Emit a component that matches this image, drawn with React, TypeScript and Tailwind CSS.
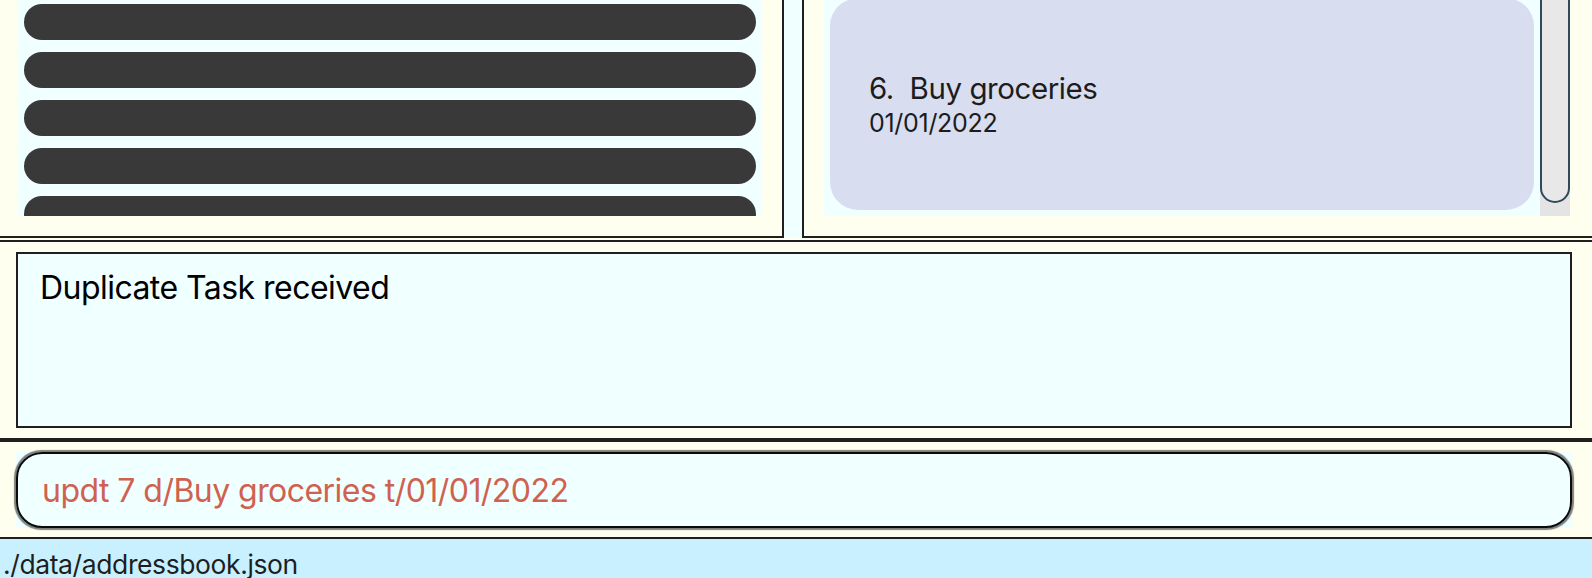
import React from "react";

const font = { fontFamily: "Inter, 'Noto Sans', sans-serif" };

export default function App() {
  const bars = [0, 1, 2, 3, 4];
  return (
    <div
      className="w-[1592px] h-[578px] overflow-hidden bg-[#fffff0] flex flex-col"
      style={font}
    >
      {/* Top panels */}
      <div className="h-[238px] flex bg-[#f0ffff] shrink-0">
        <div className="w-[784px] h-[238px] border-r-2 border-b-2 border-[#1f1f1f] bg-[#fffff0] pl-[18px] pr-[20px]">
          <div className="h-[216px] bg-[#f0ffff] overflow-hidden px-[6px] pt-[4px] flex flex-col gap-3">
            {bars.map((b) => (
              <div key={b} className="h-9 shrink-0 rounded-full bg-[#393939]" />
            ))}
          </div>
        </div>
        <div className="w-[18px]" />
        <div className="flex-1 h-[238px] border-l-2 border-b-2 border-[#1f1f1f] bg-[#fffff0] pl-[20px] pr-[22px]">
          <div className="h-[216px] flex">
            <div className="flex-1 bg-[#f0ffff] px-[6px] pb-[6px] overflow-hidden">
              <div className="h-[212px] -mt-[2px] rounded-[28px] bg-[#d9ddf0] pl-[39px] pt-[73px] flex flex-col text-[#1c1c1c]">
                <div className="text-[29.5px] leading-[34px] whitespace-pre tracking-[-0.015em]">
                  {"6.  Buy groceries"}
                </div>
                <div className="mt-[4px] text-[25px] leading-[28px] tracking-[-0.012em]">01/01/2022</div>
              </div>
            </div>
            <div className="w-[30px] bg-[#e4e4e4] flex">
              <div className="w-[31px] h-[213px] -mt-[10px] border-2 border-[#2f4a5c] rounded-b-full bg-[#e8e8e8]" />
            </div>
          </div>
        </div>
      </div>

      {/* Result display */}
      <div className="h-[2px] shrink-0" />
      <div className="border-t-2 border-[#1f1f1f] pt-[10px] pb-[10px] pl-[16px] pr-[20px] shrink-0">
        <div className="h-[176px] border-2 border-[#1f1f1f] bg-[#f0ffff] pl-[22px] pt-[16px]">
          <div className="text-[32px] leading-[36px] text-black tracking-[-0.017em]">
            Duplicate Task received
          </div>
        </div>
      </div>

      {/* Command box */}
      <div className="border-t-4 border-[#1f1f1f] pt-[10px] pb-[9px] pl-[16px] pr-[20px] shrink-0">
        <div className="h-[76px] bg-[#f0ffff]">
          <div className="h-full rounded-[26px] border-2 border-[#0a0a0a] shadow-[0_0_1px_1.5px_rgba(0,0,0,0.5)] flex items-center pl-[24px] pt-[2px]">
            <span className="text-[32px] leading-[36px] text-[#d0614f] tracking-[-0.017em]">
              updt 7 d/Buy groceries t/01/01/2022
            </span>
          </div>
        </div>
      </div>

      {/* Status bar */}
      <div className="flex-1 border-t-2 border-[#1f1f1f] bg-[#c8f0ff] pl-[3px] pt-[10px]">
        <div className="text-[26.5px] leading-[30px] text-[#1e1e1e] tracking-[-0.015em]">
          ./data/addressbook.json
        </div>
      </div>
    </div>
  );
}
